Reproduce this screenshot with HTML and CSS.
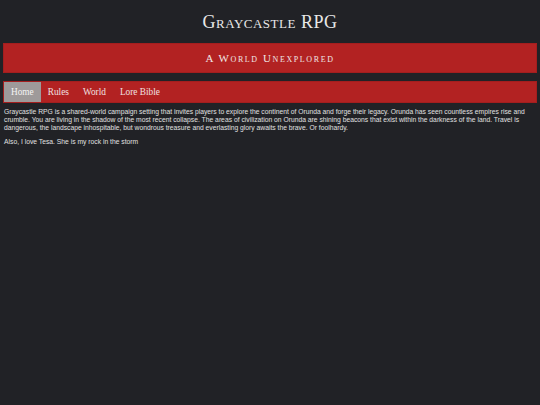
FILE: index.html
```html
<!DOCTYPE html>
<html>
<head>
<meta charset="utf-8">
<link rel="stylesheet" href="styles.css">
</head>
<body>
<header class="site-header">
  <h1 class="site-title">Graycastle RPG</h1>
  <div class="banner">A World Unexplored</div>
</header>
<nav class="nav">
  <a class="nav-item active">Home</a>
  <a class="nav-item">Rules</a>
  <a class="nav-item">World</a>
  <a class="nav-item">Lore Bible</a>
</nav>
<main class="content">
  <p>Graycastle RPG is a shared-world campaign setting that invites players to explore the continent of Orunda and forge their legacy. Orunda has seen countless empires rise and crumble. You are living in the shadow of the most recent collapse. The areas of civilization on Orunda are shining beacons that exist within the darkness of the land. Travel is dangerous, the landscape inhospitable, but wondrous treasure and everlasting glory awaits the brave. Or foolhardy.</p>
  <p>Also, I love Tesa. She is my rock in the storm</p>
</main>
</body>
</html>
```
FILE: styles.css
```css
html, body {
  margin: 0;
  padding: 0;
  background: #212226;
}
body {
  padding: 0 3px;
  color: #e6e6e6;
  font-family: "Liberation Sans", Arial, sans-serif;
}
.site-header {
  text-align: center;
}
.site-title {
  margin: 0;
  padding-top: 12px;
  height: 33px;
  box-sizing: border-box;
  font-family: "Liberation Serif", "DejaVu Serif", serif;
  font-variant: small-caps;
  font-weight: normal;
  font-size: 18px;
  line-height: 21px;
  letter-spacing: 0.5px;
  color: #e8e8e8;
}
.banner {
  margin-top: 10px;
  height: 30px;
  box-sizing: border-box;
  background: #b22222;
  border: 1px solid #a41e1e;
  color: #f0e6e6;
  font-family: "Liberation Serif", "DejaVu Serif", serif;
  font-variant: small-caps;
  font-size: 11px;
  line-height: 28px;
  letter-spacing: 1.6px;
}
.nav {
  display: flex;
  margin-top: 8px;
  height: 22px;
  background: #b22222;
  border: 1px solid #a41e1e;
  box-sizing: border-box;
}
.nav-item {
  padding: 0 7px;
  font-family: "Liberation Serif", "DejaVu Serif", serif;
  font-size: 9.3px;
  line-height: 20px;
  color: #f0e0e0;
}
.nav-item.active {
  background: #9e9a9a;
  color: #f4f4f4;
}
.content {
  padding: 5px 1px 0;
  font-size: 6.75px;
  line-height: 8px;
  color: #e0e0e0;
}
.content p {
  margin: 0 0 6px;
}
```
